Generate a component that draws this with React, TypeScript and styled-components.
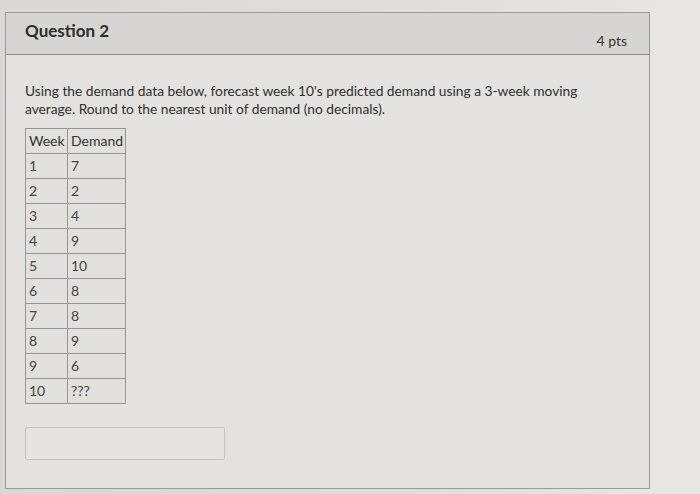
import styled, { createGlobalStyle } from 'styled-components'

const GlobalStyle = createGlobalStyle`
  html, body {
    margin: 0;
    padding: 0;
  }
  body {
    width: 700px;
    height: 494px;
    overflow: hidden;
    background: linear-gradient(90deg, #d9d8d4 0%, #dfdedb 60%, #e8e7e5 100%);
    font-family: Lato, 'Open Sans', sans-serif;
    color: #333;
  }
`

const StyledPage = styled.div`
  padding: 12px 0 0 5px;
`

const StyledCard = styled.div`
  width: 645px;
  height: 477px;
  box-sizing: border-box;
  border: 1px solid #9a9995;
  background: #e3e2de;
  display: flex;
  flex-direction: column;
`

const StyledHeader = styled.div`
  height: 42px;
  box-sizing: border-box;
  background: #d6d5d1;
  border-bottom: 1px solid #8e8d89;
  display: flex;
  align-items: center;
  justify-content: space-between;
  padding: 0 22px 0 19px;
`

const StyledTitle = styled.h2`
  margin: 0 0 6px;
  font-size: 17px;
  font-weight: 700;
  color: #2d2d2d;
`

const StyledPoints = styled.span`
  margin-top: 14px;
  font-size: 14px;
  color: #333;
`

const StyledBody = styled.div`
  padding: 27px 18px 0 19px;
  display: flex;
  flex-direction: column;
  align-items: flex-start;
`

const StyledQuestion = styled.p`
  margin: 0 0 10px;
  width: 600px;
  font-size: 13.75px;
  line-height: 18px;
  color: #2f2f2f;
`

const StyledTable = styled.table`
  border-collapse: collapse;
  table-layout: fixed;
  font-size: 14px;
  color: #444;
  background: #e1e0dc;
`

const StyledCell = styled.td<{ $wide?: boolean }>`
  border: 1px solid #969591;
  height: 24px;
  padding: 0 2px 0 3px;
  width: ${({ $wide }) => ($wide ? '51px' : '36px')};
  text-align: left;
  line-height: 1;
  white-space: nowrap;
`

const StyledHeadCell = styled(StyledCell).attrs({ as: 'th' })`
  font-weight: 400;
  color: #333;
`

const StyledAnswer = styled.div`
  margin-top: 23px;
  width: 200px;
  height: 33px;
  box-sizing: border-box;
  border: 1px solid #c4c3bf;
  border-radius: 2px;
  background: #e5e4e0;
`

const rows: [string, string][] = [
  ['1', '7'],
  ['2', '2'],
  ['3', '4'],
  ['4', '9'],
  ['5', '10'],
  ['6', '8'],
  ['7', '8'],
  ['8', '9'],
  ['9', '6'],
  ['10', '???'],
]

export default function App() {
  return (
    <>
      <GlobalStyle />
      <StyledPage>
        <StyledCard>
          <StyledHeader>
            <StyledTitle>Question 2</StyledTitle>
            <StyledPoints>4 pts</StyledPoints>
          </StyledHeader>
          <StyledBody>
            <StyledQuestion>
              Using the demand data below, forecast week 10's predicted demand using a 3-week moving
              <br />
              average. Round to the nearest unit of demand (no decimals).
            </StyledQuestion>
            <StyledTable>
              <thead>
                <tr>
                  <StyledHeadCell>Week</StyledHeadCell>
                  <StyledHeadCell $wide>Demand</StyledHeadCell>
                </tr>
              </thead>
              <tbody>
                {rows.map(([week, demand]) => (
                  <tr key={week}>
                    <StyledCell>{week}</StyledCell>
                    <StyledCell $wide>{demand}</StyledCell>
                  </tr>
                ))}
              </tbody>
            </StyledTable>
            <StyledAnswer />
          </StyledBody>
        </StyledCard>
      </StyledPage>
    </>
  )
}
